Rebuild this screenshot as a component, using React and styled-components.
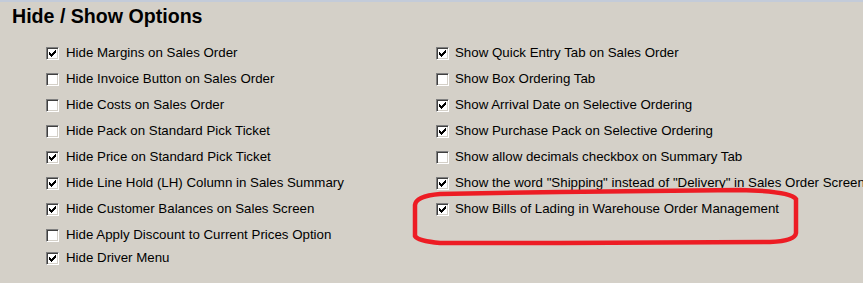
import React from 'react'
import styled, { createGlobalStyle } from 'styled-components'

const GlobalStyle = createGlobalStyle`
  html, body {
    margin: 0;
    padding: 0;
    background: #d4d0c8;
  }
  body {
    font-family: "Liberation Sans", Arial, sans-serif;
    color: #000;
  }
`

const Page = styled.div`
  position: relative;
  width: 863px;
  height: 283px;
  overflow: hidden;
  background: #d4d0c8;
`
const TopStrip = styled.div`
  height: 2px;
  background: #c3cbd9;
`
const Header = styled.div`
  height: 38px;
  box-sizing: border-box;
  padding: 2px 0 0 12px;
`
const Title = styled.h1`
  margin: 0;
  font-size: 19.6px;
  line-height: 24px;
  font-weight: bold;
`
const Columns = styled.div`
  display: grid;
  grid-template-columns: 390px 1fr;
  padding-left: 46px;
`
const Column = styled.div`
  display: flex;
  flex-direction: column;
  min-width: 0;
`
const Row = styled.label`
  display: flex;
  align-items: center;
  gap: ${p => p.gap}px;
  height: 26px;
  margin-top: ${p => (p.tight ? -3 : 0)}px;
  font-size: 13.3px;
  line-height: 26px;
  white-space: nowrap;
`
const Box = styled.span`
  flex: none;
  width: 13px;
  height: 13px;
  box-sizing: border-box;
  background: #fff;
  border-top: 1px solid #808080;
  border-left: 1px solid #808080;
  border-right: 1px solid #fff;
  border-bottom: 1px solid #fff;
  box-shadow: inset 1px 1px 0 #404040, inset -1px -1px 0 #d4d0c8;
  display: flex;
`
const Marker = styled.svg`
  position: absolute;
  left: 0;
  top: 0;
  pointer-events: none;
`

const CheckBox = ({ checked }) => (
  <Box>
    {checked && (
      <svg width="11" height="11" viewBox="0 0 11 11" shapeRendering="crispEdges">
        <path d="M2 4h1v1h1v1h1V5h1V4h1V3h1V2h1v3H8v1H7v1H6v1H5v1H4V8H3V7H2z" fill="#000" />
      </svg>
    )}
  </Box>
)

const left = [
  ['Hide Margins on Sales Order', true],
  ['Hide Invoice Button on Sales Order', false],
  ['Hide Costs on Sales Order', false],
  ['Hide Pack on Standard Pick Ticket', false],
  ['Hide Price on Standard Pick Ticket', true],
  ['Hide Line Hold (LH) Column in Sales Summary', true],
  ['Hide Customer Balances on Sales Screen', true],
  ['Hide Apply Discount to Current Prices Option', false],
  ['Hide Driver Menu', true],
]

const right = [
  ['Show Quick Entry Tab on Sales Order', true],
  ['Show Box Ordering Tab', false],
  ['Show Arrival Date on Selective Ordering', true],
  ['Show Purchase Pack on Selective Ordering', true],
  ['Show allow decimals checkbox on Summary Tab', false],
  ['Show the word "Shipping" instead of "Delivery" in Sales Order Screen', true],
  ['Show Bills of Lading in Warehouse Order Management', true],
]

const App = () => {
  return (
    <Page>
      <GlobalStyle />
      <TopStrip />
      <Header>
        <Title>Hide / Show Options</Title>
      </Header>
      <Columns>
        <Column>
          {left.map(([text, checked], i) => (
            <Row key={text} gap={7} tight={i === left.length - 1}>
              <CheckBox checked={checked} />
              {text}
            </Row>
          ))}
        </Column>
        <Column>
          {right.map(([text, checked]) => (
            <Row key={text} gap={6}>
              <CheckBox checked={checked} />
              {text}
            </Row>
          ))}
        </Column>
      </Columns>
      <Marker width="863" height="283">
        <path
          d="M415 236 L415 205 Q416 196 440 194 L560 192 L740 190 Q790 191 796 199 L796 233 Q795 241 770 242 L560 243 L440 243 Q418 241 415 236 Z"
          fill="none"
          stroke="#ed1c24"
          strokeWidth="4.5"
        />
      </Marker>
    </Page>
  )
}

export default App
